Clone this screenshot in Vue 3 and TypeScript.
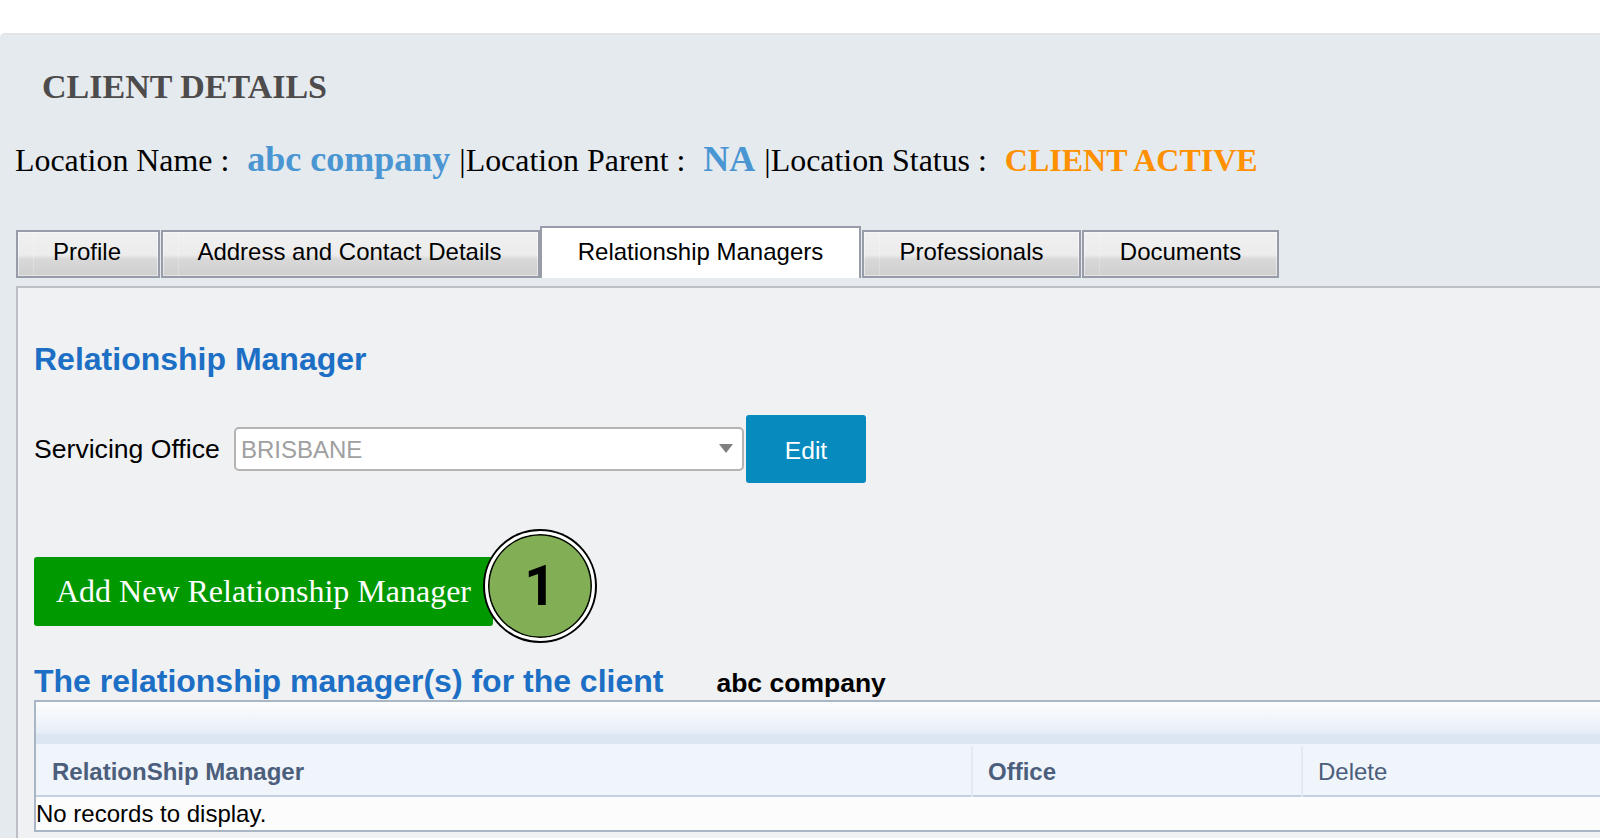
<script setup lang="ts">
interface Tab { label: string; width: number; active?: boolean }
const tabs: Tab[] = [
  { label: 'Profile', width: 144 },
  { label: 'Address and Contact Details', width: 379 },
  { label: 'Relationship Managers', width: 321, active: true },
  { label: 'Professionals', width: 219 },
  { label: 'Documents', width: 197 },
]
</script>

<template>
  <div class="page">
    <section class="panel">
      <h1 class="title">CLIENT DETAILS</h1>
      <div class="location">
        <span>Location Name :</span><b class="blue name">abc company</b><span class="sep">|Location Parent :</span><b class="blue na">NA</b><span class="sep">|Location Status :</span><b class="status">CLIENT ACTIVE</b>
      </div>
      <nav class="tabs">
        <div
          v-for="t in tabs"
          :key="t.label"
          class="tab"
          :class="{ active: t.active }"
          :style="{ width: t.width + 'px' }"
        >{{ t.label }}</div>
      </nav>
      <div class="content">
        <h2 class="heading">Relationship Manager</h2>
        <div class="office">
          <span class="office-label">Servicing Office</span>
          <div class="select">
            <span class="select-value">BRISBANE</span>
            <i class="caret"></i>
          </div>
          <button class="edit">Edit</button>
        </div>
        <div class="add-row">
          <button class="add">Add New Relationship Manager</button>
          <div class="badge">1</div>
        </div>
        <div class="list-head">
          <h2 class="heading small">The relationship manager(s) for the client</h2>
          <b class="client">abc company</b>
        </div>
        <div class="grid">
          <div class="toolbar"></div>
          <div class="head">
            <div class="cell strong">RelationShip Manager</div>
            <div class="cell strong">Office</div>
            <div class="cell">Delete</div>
          </div>
          <div class="empty">No records to display.</div>
        </div>
      </div>
    </section>
  </div>
</template>

<style>
html, body { margin: 0; background: #fff; overflow: hidden; }
</style>

<style scoped>
.page {
  width: 1600px;
  height: 838px;
  overflow: hidden;
  padding-top: 33px;
  box-sizing: border-box;
  font-family: "Liberation Sans", Arial, sans-serif;
  color: #000;
}
.panel {
  height: 805px;
  background: #e5eaee;
  border-top: 2px solid #e4e4e4;
  border-radius: 5px 0 0 0;
  padding: 0 0 0 16px;
  box-sizing: border-box;
  font-family: "Liberation Serif", "Times New Roman", serif;
}
.title {
  margin: 33px 0 0 26px;
  font-size: 34px;
  line-height: 38px;
  font-weight: bold;
  color: #4d4b4c;
}
.location {
  margin: 32px 0 0 -1px;
  display: flex;
  align-items: baseline;
  height: 42px;
  font-size: 31.9px;
  white-space: nowrap;
}
.blue { color: #4a96d2; font-size: 36px; }
.name { margin-left: 18px; }
.na { margin-left: 18px; }
.sep { margin-left: 9px; }
.status { margin-left: 18px; color: #ff9000; font-size: 32px; }
.tabs {
  display: flex;
  align-items: flex-end;
  gap: 1px;
  margin-top: 46px;
  height: 52px;
}
.tab {
  height: 48px;
  box-sizing: border-box;
  border: 2px solid #989ca8;
  background:
    linear-gradient(90deg, transparent 15px, rgba(255, 255, 255, 0.22) 15px 16px, transparent 16px),
    linear-gradient(#f0f0f0 0, #ececec 52%, #d8d8d8 62%, #cfcfcf 100%);
  box-shadow: inset 0 0 0 1px rgba(255, 255, 255, 0.45);
  font: 24px/40px "Liberation Sans", Arial, sans-serif;
  text-align: center;
  white-space: nowrap;
}
.tab:nth-child(-n+2) { padding-right: 2px; }
.tab.active {
  height: 52px;
  background: #fff;
  box-shadow: none;
  border-bottom: 0;
  line-height: 48px;
  margin-left: -1px;
}
.content {
  margin-top: 8px;
  width: 1700px;
  height: 560px;
  box-sizing: border-box;
  border: 2px solid #bcc0c6;
  background: #eff1f3;
  padding: 0 0 0 16px;
  font-family: "Liberation Sans", Arial, sans-serif;
}
.heading {
  margin: 52px 0 0;
  font-size: 32px;
  line-height: 38px;
  font-weight: bold;
  color: #1c6fc4;
}
.heading.small { margin: 0; }
.office {
  display: flex;
  align-items: center;
  margin-top: 37px;
  height: 68px;
}
.office-label {
  font-size: 26.6px;
  width: 200px;
  white-space: nowrap;
}
.select {
  width: 510px;
  height: 44px;
  box-sizing: border-box;
  border: 2px solid #b4b4b4;
  border-radius: 5px;
  background: #fff;
  display: flex;
  align-items: center;
  justify-content: space-between;
  padding: 0 9px 0 5px;
  font-size: 24px;
  color: #a0a0a0;
}
.select-value { padding-top: 2px; }
.caret {
  width: 0;
  height: 0;
  margin-bottom: 2px;
  border-left: 7px solid transparent;
  border-right: 7px solid transparent;
  border-top: 9px solid #808080;
}
.edit {
  width: 120px;
  height: 68px;
  margin-left: 2px;
  border: 0;
  border-radius: 3px;
  background: #078bbf;
  color: #fff;
  padding: 3px 0 0;
  font: 24.6px "Liberation Sans", Arial, sans-serif;
}
.add-row {
  position: relative;
  margin-top: 74px;
  height: 69px;
}
.add {
  width: 459px;
  height: 69px;
  border: 0;
  border-radius: 3px;
  background: #009900;
  color: #fff;
  font: 32px "Liberation Serif", "Times New Roman", serif;
  padding: 0;
  white-space: nowrap;
}
.badge {
  position: absolute;
  left: 451px;
  top: -26px;
  width: 110px;
  height: 110px;
  box-sizing: border-box;
  border-radius: 50%;
  background: #82ae55;
  border: 3px solid #fff;
  box-shadow: 0 0 0 2px #000, inset 0 0 0 1.5px #000;
  display: flex;
  align-items: center;
  justify-content: center;
  font: bold 55px Roboto, "Liberation Sans", Arial, sans-serif;
}
.list-head {
  display: flex;
  align-items: baseline;
  margin-top: 36px;
  height: 38px;
}
.client {
  margin-left: 53px;
  font-size: 26.5px;
}
.grid {
  border: 2px solid #a9b6c6;
  background: #fcfcfc;
  height: 132px;
  box-sizing: border-box;
}
.toolbar {
  height: 42px;
  background: linear-gradient(#fcfdfe 0, #eef3fa 55%, #e6edf7 74%, #dce6f3 78%, #dce6f3 100%);
}
.head {
  display: grid;
  grid-template-columns: 935px 330px 1fr;
  height: 53px;
  background: #f0f4fb;
  border-bottom: 2px solid #c3d0df;
  box-sizing: border-box;
}
.cell {
  padding: 1px 0 0 15px;
  font-size: 24px;
  line-height: 50px;
  color: #4b5e7b;
  border-left: 2px solid #e3eaf3;
  margin-top: 2px;
}
.cell:first-child { border-left: 0; padding-left: 16px; }
.strong { font-weight: bold; }
.empty {
  font-size: 24px;
  line-height: 34px;
}
</style>
